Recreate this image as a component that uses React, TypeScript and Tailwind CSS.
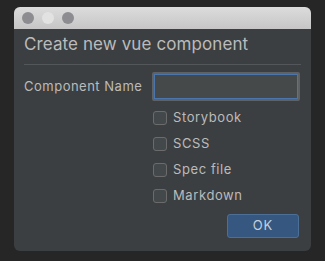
const OPTIONS = ["Storybook", "SCSS", "Spec file", "Markdown"];

function Checkbox({ label }: { label: string }) {
  return (
    <label className="flex items-center h-[26px] gap-[6px]">
      <span className="w-[14px] h-[14px] rounded-[3px] border border-[#6b6b6b] bg-[#43494a]" />
      <span className="text-[13px] tracking-[0.6px] text-[#bbbbbb]">{label}</span>
    </label>
  );
}

export default function App() {
  return (
    <div
      className="w-[325px] h-[261px] bg-[#262626] pt-[7px] pl-[14px]"
      style={{ fontFamily: "Inter, 'Liberation Sans', sans-serif" }}
    >
      <div className="w-[297px] h-[244px] rounded-[6px] overflow-hidden bg-[#3c3f41] flex flex-col">
        <div className="h-[22px] bg-gradient-to-b from-[#dcdcdc] to-[#c6c6c6] flex items-center gap-[8px] pl-[8px]">
          <span className="w-[12px] h-[12px] rounded-full bg-[#8d8d91]" />
          <span className="w-[12px] h-[12px] rounded-full bg-[#e2e2e2]" />
          <span className="w-[12px] h-[12px] rounded-full bg-[#8d8d91]" />
        </div>
        <div className="px-[10px] flex flex-col">
          <div className="h-[36px] flex items-end pb-[7px] border-b border-[#53575a] text-[17px] tracking-[0.1px] text-[#bbbbbb]">
            Create new vue component
          </div>
          <div className="flex items-center mt-[7px]">
            <span className="w-[128px] text-[13px] tracking-[0.5px] text-[#bbbbbb]">Component Name</span>
            <div className="w-[148px] h-[29px] rounded-[2px] border-[2px] border-[#5e6264] bg-[#45494a]">
              <div className="w-full h-full border border-[#4b76ad] bg-[#45494a]" />
            </div>
          </div>
          <div className="flex flex-col pl-[129px] mt-[4px]">
            {OPTIONS.map((o) => (
              <Checkbox key={o} label={o} />
            ))}
          </div>
          <div className="flex justify-end pr-[2px] mt-[5px]">
            <button className="w-[72px] h-[24px] rounded-[3px] border border-[#4c6f97] bg-[#365880] text-[13px] tracking-[1px] text-[#c5cfdb]">
              OK
            </button>
          </div>
        </div>
      </div>
    </div>
  );
}
